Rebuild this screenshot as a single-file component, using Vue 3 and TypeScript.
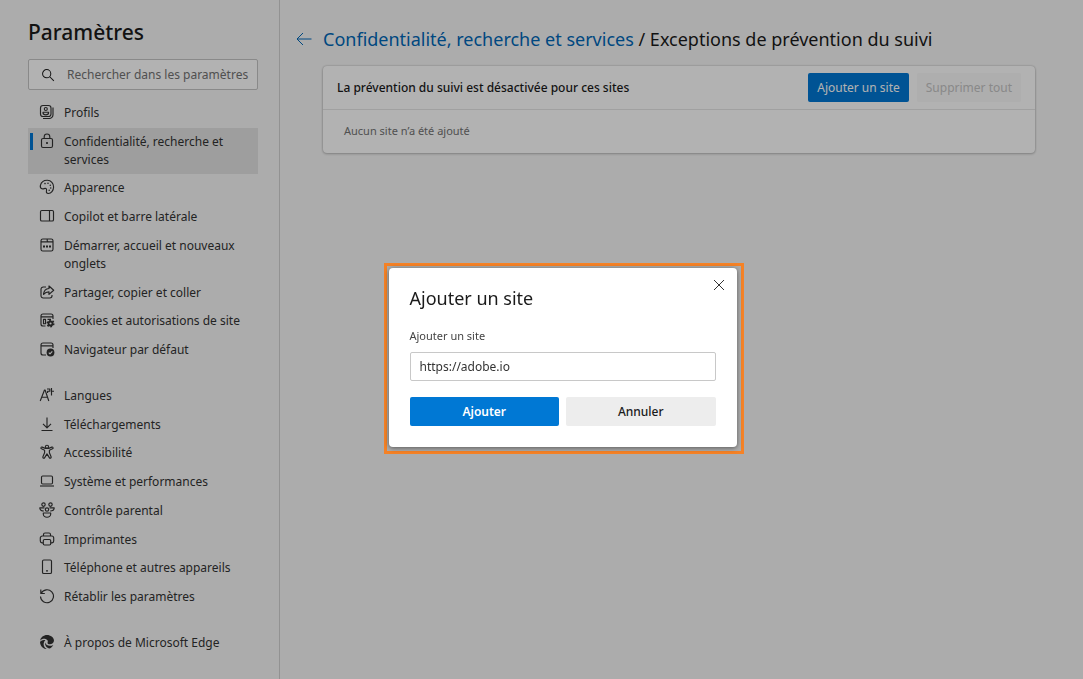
<script setup lang="ts">
import { ref } from 'vue'

interface NavItem {
  label: string
  icon: string
  current?: boolean
}

const groups: NavItem[][] = [
  [
    { label: 'Profils', icon: 'profile' },
    { label: 'Confidentialité, recherche et services', icon: 'lock', current: true },
    { label: 'Apparence', icon: 'palette' },
    { label: 'Copilot et barre latérale', icon: 'sidebar' },
    { label: 'Démarrer, accueil et nouveaux onglets', icon: 'start' },
    { label: 'Partager, copier et coller', icon: 'share' },
    { label: 'Cookies et autorisations de site', icon: 'cookies' },
    { label: 'Navigateur par défaut', icon: 'browser' },
  ],
  [
    { label: 'Langues', icon: 'language' },
    { label: 'Téléchargements', icon: 'download' },
    { label: 'Accessibilité', icon: 'accessibility' },
    { label: 'Système et performances', icon: 'laptop' },
    { label: 'Contrôle parental', icon: 'family' },
    { label: 'Imprimantes', icon: 'printer' },
    { label: 'Téléphone et autres appareils', icon: 'phone' },
    { label: 'Rétablir les paramètres', icon: 'reset' },
  ],
  [{ label: 'À propos de Microsoft Edge', icon: 'edge' }],
]

const icons: Record<string, string> = {
  profile:
    '<rect x="1.500" y="1.500" width="10.500" height="11" rx="2.500"/><path d="M14 3.500v7.200a3.800 3.800 0 0 1-3.800 3.800H4"/><circle cx="6.800" cy="5" r="1.500"/><path d="M4 8.200h5.600v.6a2.800 2 0 0 1-5.600 0z"/>',
  lock:
    '<rect x="2.500" y="5.500" width="11" height="9" rx="1.500"/><path d="M5.200 5.500V3.800a2.800 2.800 0 0 1 5.600 0v1.700"/><circle cx="8" cy="10" r=".5" fill="currentColor"/>',
  palette:
    '<path d="M1.400 6.400C2.200 3.200 5.200 1.200 8.400 1.300c3.600.1 6.300 3 6.200 6.700-.1 3.700-2.500 6.500-5.200 6.500-1.900 0-2.300-1.300-1.900-2.900.3-1.400-.1-2.300-1.400-2.200-1 .1-2 .7-3.200.3C1.500 9.200 1.100 7.800 1.400 6.400z"/><g fill="currentColor" stroke="none"><circle cx="6" cy="4.600" r=".8"/><circle cx="9" cy="4.200" r=".8"/><circle cx="11.300" cy="6.200" r=".8"/><circle cx="11.700" cy="9" r=".8"/><circle cx="10.200" cy="11.200" r=".8"/></g>',
  sidebar: '<rect x="1.500" y="2.500" width="13" height="10.500" rx="1.300"/><path d="M10.500 2.500V13"/>',
  start:
    '<rect x="2" y="2" width="12" height="12" rx="1.800"/><path d="M2 4.800h6.200M8.200 2v1.500a1.300 1.300 0 0 0 1.300 1.300H14"/><g fill="currentColor" stroke="none"><rect x="4" y="8.500" width="2" height="2"/><rect x="7" y="8.500" width="2" height="2"/><rect x="10" y="8.500" width="2" height="2"/></g>',
  share:
    '<path d="M7 3H4.200A2.200 2.200 0 0 0 2 5.200v6.600A2.200 2.200 0 0 0 4.200 14h6.600a2.200 2.200 0 0 0 2.200-2.200V11"/><path d="M10 2v2.500C6.600 4.700 4.800 6.800 4.600 10.500 6 8.600 7.700 7.900 10 7.900v2.500l4.700-4.200z"/>',
  cookies:
    '<path d="M14 7V4a2 2 0 0 0-2-2H4a2 2 0 0 0-2 2v8a2 2 0 0 0 2 2h2.500M2 4.800h12M4.500 7.300h2v4.400h-2zM8.500 7.300H12"/><circle cx="11.500" cy="11.500" r="3.300" stroke-width="1.500" stroke-dasharray="1.730 1.730"/><circle cx="11.500" cy="11.500" r="2" stroke-width="1.800"/>',
  browser:
    '<path d="M14 7V4a2 2 0 0 0-2-2H4a2 2 0 0 0-2 2v8a2 2 0 0 0 2 2h3M2 4.800h12"/><circle cx="11.500" cy="11.500" r="3.900" fill="currentColor" stroke="none"/><path d="m9.800 11.700 1.200 1.200 2.300-2.500" stroke="#f7f7f7"/>',
  language:
    '<path d="m1.200 14 4.300-11h.6L9.800 14M2.700 10.200h5.800M8 2h2.800v2.200H8.600V6M12.500 1v7.500M12.500 4.200H15"/>',
  download: '<path d="M8 1.500v10M4 7.800l4 4 4-4M2.500 14.500h11"/>',
  accessibility:
    '<circle cx="8" cy="2.800" r="1.600"/><path d="M6.300 4.400 3.200 3.100c-1.200-.4-1.800 1.200-.7 1.700L5.600 6.200v2.600l-1.700 4c-.4 1.300 1.200 1.900 1.800.8L8 9.900l2.300 3.700c.6 1.100 2.200.5 1.800-.8l-1.700-4V6.200l3.100-1.400c1.100-.5.500-2.100-.7-1.700L9.700 4.400z"/>',
  laptop: '<rect x="2.500" y="3" width="11" height="8" rx="1.200"/><path d="M1 13h14"/>',
  family:
    '<circle cx="4.500" cy="2.600" r="1.700"/><circle cx="11.500" cy="2.600" r="1.700"/><circle cx="8" cy="7.500" r="1.700"/><path d="M4.300 11h7.400v.9a3.700 3.300 0 0 1-7.400 0zM4.800 9C2.500 9 .8 8 .8 5.800h4.700M11.200 9c2.300 0 4-1 4-3.200h-4.700"/>',
  printer:
    '<path d="M4.500 5V3.500A1.500 1.500 0 0 1 6 2h4a1.500 1.500 0 0 1 1.500 1.500V5M4 11.800H3a1.700 1.700 0 0 1-1.700-1.700V7A2 2 0 0 1 3.300 5h9.400a2 2 0 0 1 2 2v3.100a1.700 1.700 0 0 1-1.700 1.700h-1"/><rect x="4.300" y="8.500" width="7.400" height="5.500" rx="1.200"/>',
  phone: '<rect x="3.500" y="1" width="9" height="13.500" rx="1.300"/><path d="M7 11.800h2"/>',
  reset: '<path d="M1.800 1.500v4h4M2.200 5.300A6.500 6.500 0 1 1 1.500 8.500"/>',
  edge:
    '<g fill="currentColor" stroke="none"><path d="M8 1C4.600 1 1.600 3.300 1.100 6.700 2.500 5 4.700 4.400 6.600 5c2.200.7 2.600 2.300 2 3.500-.3.700.2 1.500 1.300 1.700 2.500.4 5.100-1 5.100-3.700C14.700 3.300 11.500 1 8 1z"/><path d="M1 8.300C1.200 12 4 15 7.700 15.100 5.400 13.800 4.300 11.600 4.700 9.200c.2-1.300.8-2.300 1.700-3C4 5.600 1.500 6.600 1 8.300z"/><path d="M6.200 8.600c-.7 3 1.700 5.600 4.300 5.900 1.800-.8 3.100-2.100 3.800-3.600-3.100 1.700-7.200 1-8.100-2.300z"/></g>',
}

const search = ref('')
const site = ref('https://adobe.io')
</script>

<template>
  <div class="page">
    <aside class="sidebar">
      <h1>Paramètres</h1>
      <div class="search">
        <svg viewBox="0 0 16 16" aria-hidden="true"><circle cx="6.500" cy="6.500" r="4.700" /><path d="m10 10 4.700 4.700" /></svg>
        <input v-model="search" type="text" aria-label="Rechercher dans les paramètres" placeholder="Rechercher dans les paramètres" />
      </div>
      <nav>
        <ul v-for="(group, g) in groups" :key="g">
          <li v-for="item in group" :key="item.icon">
            <a href="#" :class="{ current: item.current }" :aria-current="item.current ? 'page' : undefined">
              <svg viewBox="0 0 16 16" aria-hidden="true" v-html="icons[item.icon]"></svg>
              <span>{{ item.label }}</span>
            </a>
          </li>
        </ul>
      </nav>
    </aside>

    <main>
      <header>
        <button class="back" type="button" aria-label="Retour">
          <svg viewBox="0 0 16 16" aria-hidden="true"><path d="M15.500 8H1M7 2 1 8l6 6" /></svg>
        </button>
        <h2><a href="#">Confidentialité, recherche et services</a> / Exceptions de prévention du suivi</h2>
      </header>
      <section class="card">
        <div class="card-head">
          <h3>La prévention du suivi est désactivée pour ces sites</h3>
          <button class="primary" type="button">Ajouter un site</button>
          <button class="muted" type="button" disabled>Supprimer tout</button>
        </div>
        <p>Aucun site n’a été ajouté</p>
      </section>
    </main>

    <div class="overlay">
      <div class="highlight">
        <form class="dialog" role="dialog" aria-labelledby="dialog-title" @submit.prevent>
          <button class="close" type="button" aria-label="Fermer">
            <svg viewBox="0 0 12 12" aria-hidden="true"><path d="m1 1 10 10M11 1 1 11" /></svg>
          </button>
          <h2 id="dialog-title">Ajouter un site</h2>
          <label for="site">Ajouter un site</label>
          <input id="site" v-model="site" type="text" />
          <div class="actions">
            <button class="primary" type="submit">Ajouter</button>
            <button class="secondary" type="button">Annuler</button>
          </div>
        </form>
      </div>
    </div>
  </div>
</template>

<style>
body {
  margin: 0;
}
</style>

<style scoped>
.page {
  display: flex;
  min-height: 100vh;
  background: #f7f7f7;
  color: #1b1b1b;
  font-family: "Segoe UI", "Noto Sans", "Open Sans", sans-serif;
  font-size: 12px;
  line-height: 18px;
}
.page *,
.page {
  box-sizing: border-box;
}
h1,
h2,
h3,
p,
ul {
  margin: 0;
  padding: 0;
}
ul {
  list-style: none;
}
a {
  color: inherit;
  text-decoration: none;
}
button,
input {
  font: inherit;
}
svg {
  flex: none;
  width: 16px;
  height: 16px;
  fill: none;
  stroke: currentColor;
  stroke-width: 1.15;
  stroke-linejoin: round;
  overflow: visible;
}
.sidebar {
  flex: none;
  width: 280px;
  padding: 17px 21px 0 28px;
  border-right: 1px solid #d2d2d2;
}
h1 {
  font-size: 21px;
  font-weight: 500;
  line-height: 30px;
}
.search {
  display: flex;
  align-items: center;
  gap: 12px;
  height: 31px;
  margin: 12px 0 9px;
  padding-left: 12px;
  border: 1px solid #c4c4c4;
  border-radius: 2px;
  background: #fff;
}
.search svg {
  width: 14px;
  height: 14px;
}
.search input {
  flex: 1;
  min-width: 0;
  padding: 0;
  border: 0;
  outline: 0;
  background: none;
}
.search input::placeholder {
  color: #737373;
  opacity: 1;
}
nav ul {
  display: flex;
  flex-direction: column;
  justify-content: space-between;
  margin-bottom: 18px;
}
nav ul:nth-child(1) {
  min-height: 265px;
}
nav ul:nth-child(2) {
  min-height: 229px;
}
nav a {
  position: relative;
  display: flex;
  gap: 9px;
  padding: 5px 11px;
  color: #333;
}
nav a.current {
  background: #e3e3e3;
}
nav a.current::before {
  content: "";
  position: absolute;
  top: 5px;
  left: 2px;
  width: 3px;
  height: 17px;
  background: #0078d4;
}
main {
  flex: 1;
  min-width: 0;
  padding: 24px 48px 0 16px;
}
header {
  display: flex;
  align-items: center;
  gap: 11px;
}
header h2 {
  font-size: 18px;
  font-weight: 400;
  line-height: 30px;
}
header a {
  color: #0067b8;
}
.back {
  display: flex;
  padding: 0;
  border: 0;
  background: none;
  color: #0067b8;
}
.back svg {
  stroke-width: 1;
}
.card {
  margin: 12px 0 0 27px;
  border-radius: 4px;
  background: #fff;
  box-shadow: 0 0 2px rgba(0, 0, 0, 0.25), 0 1px 3px rgba(0, 0, 0, 0.2);
}
.card-head {
  display: flex;
  align-items: center;
  gap: 8px;
  padding: 7px 14px;
  border-bottom: 1px solid #e5e5e5;
}
h3 {
  flex: 1;
  font-size: 12px;
  font-weight: 500;
}
.card button {
  height: 29px;
  padding: 0 9px;
  border: 0;
  border-radius: 2px;
}
.card p {
  padding: 12px 21px 13px;
  color: #737373;
  font-size: 11px;
}
.primary {
  background: #0078d4;
  color: #fff;
}
.muted {
  background: #fafafa;
  color: #c4c4c4;
}
.overlay {
  position: fixed;
  inset: 0;
  display: flex;
  align-items: center;
  justify-content: center;
  padding: 38px 0 0 44px;
  background: rgba(0, 0, 0, 0.3);
}
.highlight {
  padding: 2px 4px 4px 2px;
  border: 3px solid #f58226;
}
.dialog {
  position: relative;
  display: flex;
  flex-direction: column;
  width: 348px;
  padding: 15px 21px 21px;
  border-radius: 4px;
  background: #fff;
  box-shadow: 0 1px 5px rgba(0, 0, 0, 0.5);
}
.dialog h2 {
  font-size: 18px;
  font-weight: 400;
  line-height: 30px;
}
.dialog label {
  margin: 14px 0 7px;
  color: #444;
  font-size: 11px;
}
.dialog input {
  height: 29px;
  padding: 0 9px;
  border: 1px solid #c8c8c8;
  border-radius: 2px;
  outline: 0;
  color: #333;
}
.actions {
  display: grid;
  grid-template-columns: 1fr 1fr;
  gap: 7px;
  margin-top: 16px;
}
.actions button {
  height: 29px;
  border: 0;
  border-radius: 2px;
  font-weight: 600;
}
.actions .secondary {
  background: #ededed;
  color: #1b1b1b;
  font-weight: 500;
}
.close {
  position: absolute;
  top: 11px;
  right: 12px;
  display: flex;
  padding: 0;
  border: 0;
  background: none;
  color: #333;
}
.close svg {
  width: 12px;
  height: 12px;
  stroke-width: 1;
}
</style>
